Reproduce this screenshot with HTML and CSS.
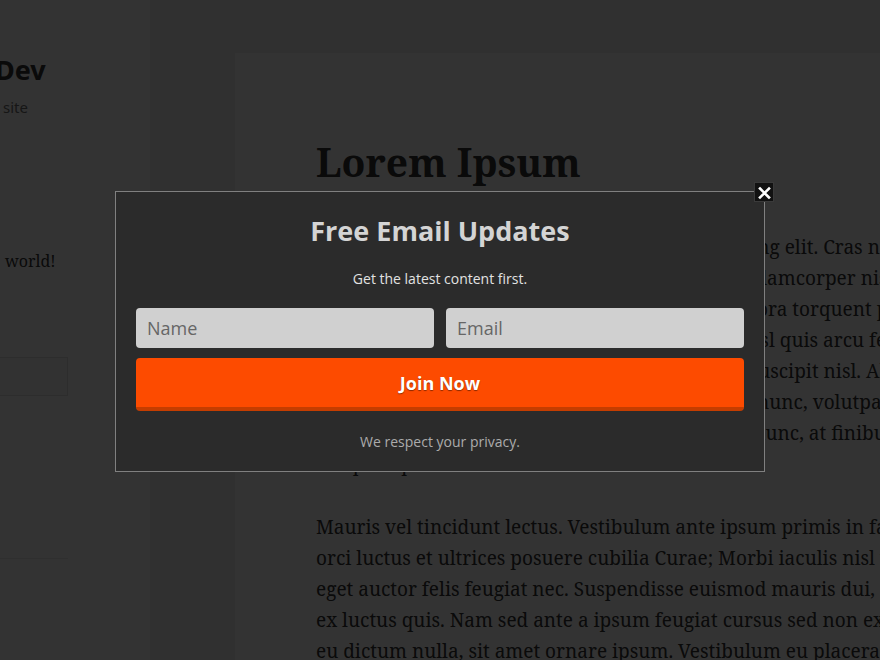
FILE: index.html
```html
<!DOCTYPE html>
<html lang="en">
<head>
<meta charset="utf-8">
<title>Dev – Lorem Ipsum</title>
<link rel="stylesheet" href="styles.css">
</head>
<body>
<div class="site">
  <aside class="sidebar">
    <p class="site-title">Dev</p>
    <p class="site-description">site</p>
    <p class="recent-post">world!</p>
    <div class="search-field"></div>
    <div class="widget-rule"></div>
  </aside>
  <main class="content">
    <article class="post">
      <h1 class="entry-title">Lorem Ipsum</h1>
      <p class="entry-text">Lorem ipsum dolor sit amet, consectetur adipiscing elit. Cras nec tellus at lorem<br>Etiam gravida magna vitae dolor dapibus, quis ullamcorper nisl vehicula<br>Nulla vel quam. Class aptent taciti sociosqu ad litora torquent per conubia nostra,<br>per inceptos himenaeos. Phasellus eget sagittis nisl quis arcu fermentum<br>Maecenas sodales velit in tortor viverra, quis et suscipit nisl. Aliquam erat<br>Aenean blandit ante id magna tempor, vitae orci nunc, volutpat dignissim<br>Donec pretium lacus eu mi ullamcorper, a tellus nunc, at finibus mauris<br>nec pede placerat.</p>
      <p class="entry-text">Mauris vel tincidunt lectus. Vestibulum ante ipsum primis in faucibus<br>orci luctus et ultrices posuere cubilia Curae; Morbi iaculis nisl vitae<br>eget auctor felis feugiat nec. Suspendisse euismod mauris dui, non<br>ex luctus quis. Nam sed ante a ipsum feugiat cursus sed non ex<br>eu dictum nulla, sit amet ornare ipsum. Vestibulum eu placerat</p>
    </article>
  </main>
</div>

<div class="overlay">
  <div class="modal">
    <button class="modal-close" type="button" aria-label="Close">
      <svg width="20" height="20" viewBox="0 0 20 20"><path d="M6 6.5 L15 15.5 M15 6.5 L6 15.5" stroke="#fff" stroke-width="2.6" stroke-linecap="square" fill="none"/></svg>
    </button>
    <h2 class="modal-title">Free Email Updates</h2>
    <p class="modal-subtitle">Get the latest content first.</p>
    <form class="modal-form">
      <div class="modal-fields">
        <input class="modal-input" type="text" placeholder="Name">
        <input class="modal-input" type="email" placeholder="Email">
      </div>
      <button class="modal-submit" type="button">Join Now</button>
    </form>
    <p class="modal-privacy">We respect your privacy.</p>
  </div>
</div>
</body>
</html>
```
FILE: styles.css
```css
html, body {
  margin: 0;
  padding: 0;
}
body {
  background: #f1f1f1;
  width: 880px;
  height: 660px;
  overflow: hidden;
  color: #333;
}
.site {
  display: flex;
  width: 880px;
  height: 660px;
  overflow: hidden;
}

/* sidebar */
.sidebar {
  flex: 0 0 150px;
  background: #fff;
  padding-top: 54px;
  box-sizing: border-box;
}
.site-title {
  margin: 0 0 0 -5px;
  font-family: "Noto Sans", "Open Sans", sans-serif;
  font-weight: 700;
  font-size: 27px;
  line-height: 32px;
  color: #333;
}
.site-description {
  margin: 11px 0 0 3px;
  font-family: "Noto Sans", "Open Sans", sans-serif;
  font-size: 15px;
  line-height: 20px;
  color: #707070;
}
.recent-post {
  margin: 132px 0 0 5px;
  font-family: "Noto Serif", "DejaVu Serif", serif;
  font-size: 16px;
  line-height: 24px;
  color: #333;
}
.search-field {
  margin: 84px 0 0 -20px;
  width: 88px;
  height: 39px;
  box-sizing: border-box;
  background: #f7f7f7;
  border: 1px solid rgba(51, 51, 51, 0.1);
}
.widget-rule {
  margin-top: 162px;
  width: 68px;
  border-top: 1px solid rgba(51, 51, 51, 0.1);
}

/* content */
.content {
  flex: 1 1 auto;
  margin-left: 85px;
  padding-top: 53px;
  min-width: 0;
}
.post {
  background: #fff;
  height: 620px;
  padding: 85px 0 0 81px;
  box-sizing: border-box;
  white-space: nowrap;
  font-family: "Noto Serif", "DejaVu Serif", serif;
}
.entry-title {
  margin: 0 0 46px;
  font-size: 39px;
  line-height: 48px;
  font-weight: 700;
  color: #333;
}
.entry-text {
  margin: 0 0 32px;
  font-size: 19px;
  line-height: 31px;
  color: #333;
}

/* popup */
.overlay {
  position: fixed;
  inset: 0;
  padding-top: 2px;
  background: rgba(0, 0, 0, 0.8);
  display: flex;
  align-items: center;
  justify-content: center;
}
.modal {
  position: relative;
  width: 650px;
  box-sizing: border-box;
  padding: 19px 20px;
  background: #2b2b2b;
  border: 1px solid #808080;
  font-family: "Open Sans", "Noto Sans", sans-serif;
  text-align: center;
}
.modal-close {
  position: absolute;
  top: -10px;
  right: -10px;
  width: 20px;
  height: 20px;
  box-sizing: border-box;
  padding: 0;
  border: 1px solid #3a3a3a;
  background: #111;
  display: flex;
  align-items: center;
  justify-content: center;
  cursor: pointer;
}
.modal-close svg {
  display: block;
  flex: none;
}
.modal-title {
  margin: 0;
  font-size: 27px;
  line-height: 40px;
  font-weight: 700;
  color: #d4d4d4;
}
.modal-subtitle {
  margin: 18px 0 0;
  font-size: 14px;
  line-height: 20px;
  color: #e2e2e2;
}
.modal-form {
  margin: 19px 0 0;
  display: flex;
  flex-direction: column;
  gap: 10px;
}
.modal-fields {
  display: flex;
  gap: 12px;
}
.modal-input {
  flex: 1 1 0;
  min-width: 0;
  height: 40px;
  box-sizing: border-box;
  margin: 0;
  padding: 0 11px;
  border: 0;
  border-radius: 4px;
  background: #d0d0d0;
  font-family: "Open Sans", "Noto Sans", sans-serif;
  font-size: 18px;
  color: #333;
  outline: none;
}
.modal-input::placeholder {
  color: #666;
  opacity: 1;
}
.modal-submit {
  height: 53px;
  box-sizing: border-box;
  margin: 0;
  padding: 2px 0 0;
  border: 0;
  border-bottom: 4px solid #c53d00;
  border-radius: 4px;
  background: #fd4b00;
  font-family: "Open Sans", "Noto Sans", sans-serif;
  font-size: 18px;
  font-weight: 700;
  color: #fff;
  text-shadow: 0 1px 1px rgba(0, 0, 0, 0.45);
  cursor: pointer;
}
.modal-privacy {
  margin: 21px 0 0;
  font-size: 14px;
  line-height: 20px;
  color: #ababab;
}
```
